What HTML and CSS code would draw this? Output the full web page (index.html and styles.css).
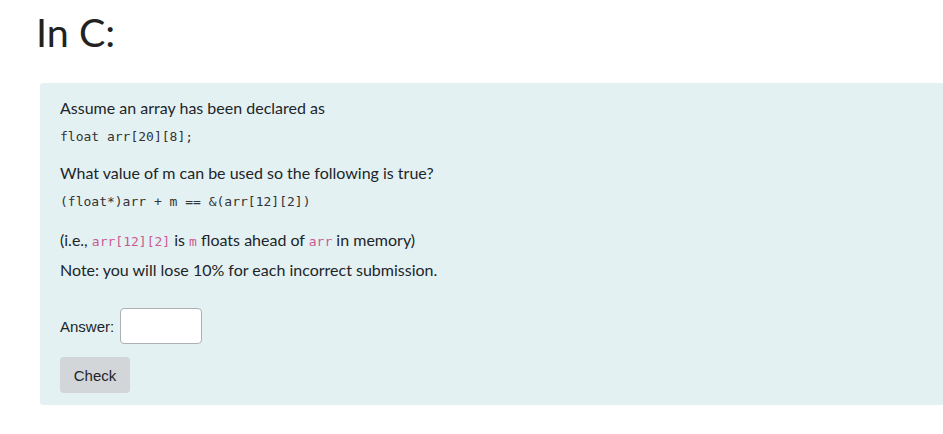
FILE: index.html
```html
<!DOCTYPE html>
<html>
<head>
<meta charset="utf-8">
<link rel="stylesheet" href="styles.css">
</head>
<body>
<h1 class="title">In C:</h1>
<div class="panel">
  <p class="line">Assume an array has been declared as</p>
  <p class="code-line"><code>float arr[20][8];</code></p>
  <p class="line q">What value of m can be used so the following is true?</p>
  <p class="code-line"><code>(float*)arr + m == &amp;(arr[12][2])</code></p>
  <p class="line ie">(i.e., <code class="pink">arr[12][2]</code> is <code class="pink">m</code> floats ahead of <code class="pink">arr</code> in memory)</p>
  <p class="line">Note: you will lose 10% for each incorrect submission.</p>
  <div class="answer">
    <label class="answer-label">Answer:</label>
    <input class="answer-input" type="text">
  </div>
  <button class="check">Check</button>
</div>
</body>
</html>
```
FILE: styles.css
```css
html, body {
  margin: 0;
  padding: 0;
  background: #fff;
}
body {
  padding: 0 0 0 36px;
  font-family: Lato, "Noto Sans", sans-serif;
  color: #212529;
  overflow: hidden;
}
.title {
  margin: 10px 0 0 0;
  font-family: Lato, sans-serif;
  font-weight: 400;
  font-size: 39.5px;
  line-height: 44px;
  color: #222;
}
.panel {
  margin: 29px 0 0 4px;
  background: #e4f1f3;
  padding: 11px 20px 12px 20px;
  border-radius: 3px 0 0 3px;
}
.line {
  margin: 0;
  font-size: 16px;
  line-height: 20px;
  padding: 4px 0;
}
.q { margin-top: 9px; }
.ie { margin-top: 11px; }
.code-line {
  margin: 0;
  line-height: 20px;
  padding: 3px 0 3px;
}
code {
  font-family: "DejaVu Sans Mono", monospace;
  font-size: 13px;
  color: #333;
}
.pink { color: #c95b92; }
.answer {
  display: flex;
  align-items: center;
  gap: 6px;
  margin-top: 24px;
}
.answer-label {
  font-family: "Liberation Sans", Arial, sans-serif;
  font-size: 15px;
}
.answer-input {
  width: 82px;
  height: 36px;
  box-sizing: border-box;
  border: 1px solid #aab0b5;
  border-radius: 4px;
  background: #fff;
  margin: 0;
}
.check {
  display: block;
  margin-top: 13px;
  width: 70px;
  height: 36px;
  border: none;
  border-radius: 4px;
  background: #d2d6d9;
  font-family: "Liberation Sans", Arial, sans-serif;
  font-size: 15px;
  color: #212529;
}
```
